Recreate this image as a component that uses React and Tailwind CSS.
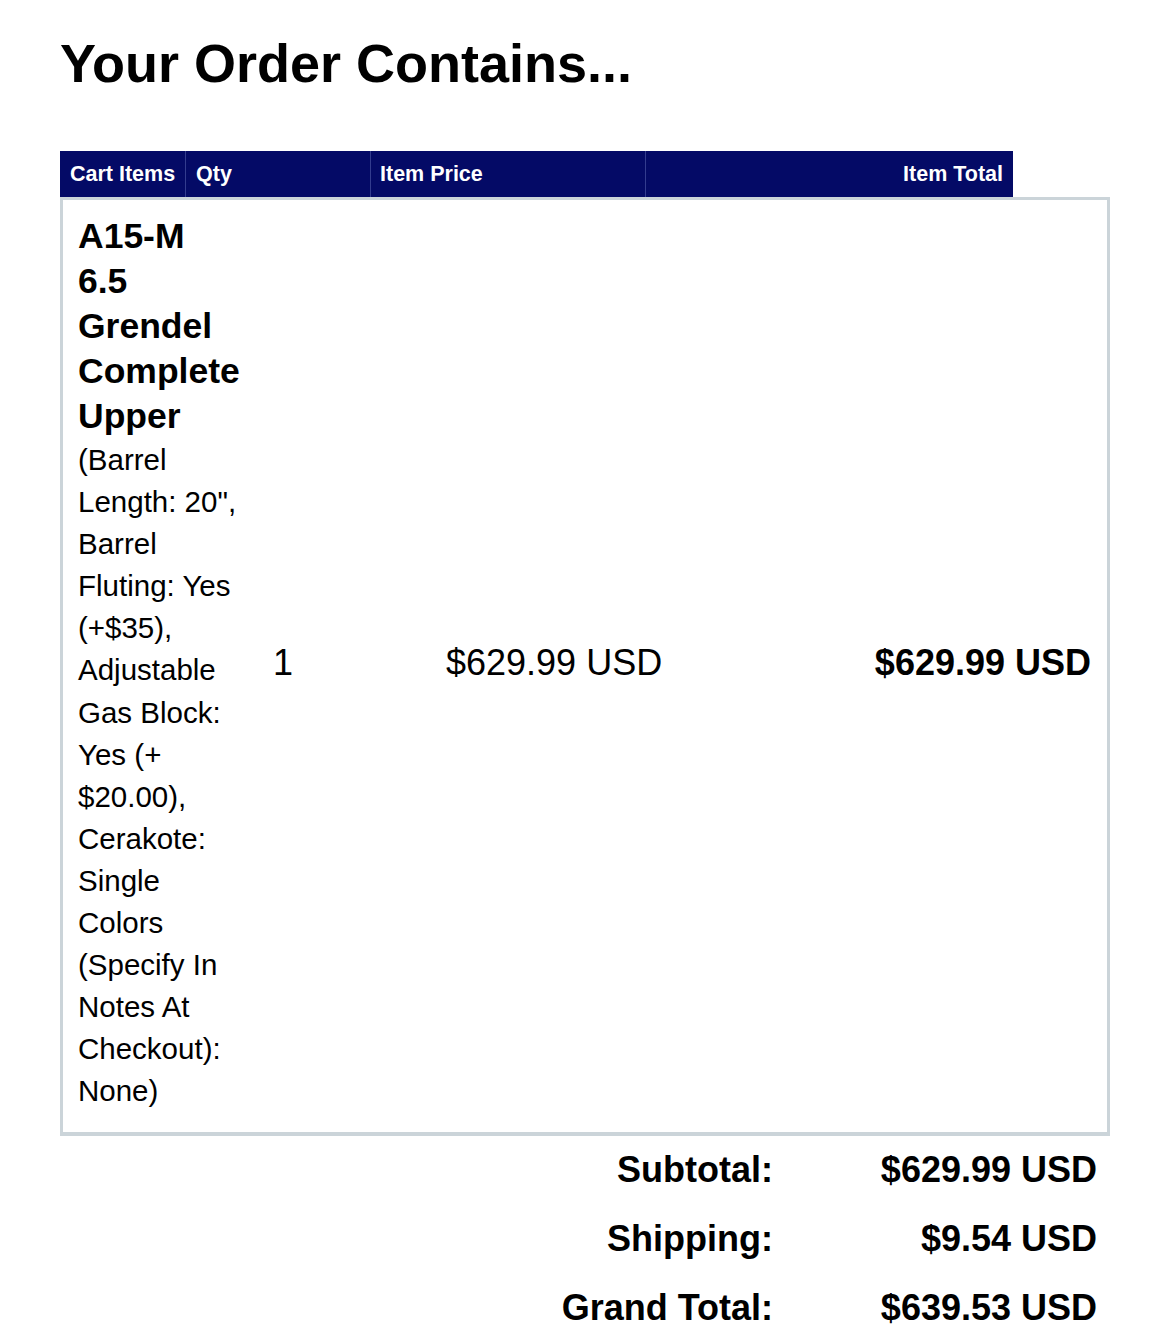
import React from 'react'

const headers = [
  { label: 'Cart Items', w: 'w-[125px]', align: 'pl-[10px]' },
  { label: 'Qty', w: 'w-[185px]', align: 'pl-[10px]' },
  { label: 'Item Price', w: 'w-[275px]', align: 'pl-[9px]' },
  { label: 'Item Total', w: 'w-[368px]', align: 'justify-end pr-[10px]' },
]

const summary = [
  { label: 'Subtotal:', value: '$629.99 USD' },
  { label: 'Shipping:', value: '$9.54 USD' },
  { label: 'Grand Total:', value: '$639.53 USD' },
]

const App = () => {
  return (
    <div className="min-h-[1341px] bg-white px-[60px] font-['Liberation_Sans',Arial,sans-serif] text-black">
      <h1 className="pt-[36px] text-[54px] font-bold leading-[54px]">Your Order Contains...</h1>

      <div className="mt-[61px] flex h-[46px] w-[953px] bg-[#040a66] text-white">
        {headers.map((h, i) => (
          <div
            key={h.label}
            className={`flex h-full items-center text-[21.5px] font-bold ${h.w} ${h.align} ${i > 0 ? 'border-l border-[#333c8e]' : ''}`}
          >
            {h.label}
          </div>
        ))}
      </div>

      <div className="flex w-[1050px] border-[3px] border-b-4 border-[#cbd4d9] pt-[14px] pb-[19px]">
        <div className="w-[200px] shrink-0 pl-[15px]">
          <div className="w-[162px]">
            <p className="text-[35.5px] font-bold leading-[45px]">A15-M 6.5 Grendel Complete Upper</p>
            <p className="text-[29.5px] leading-[42.1px]">
              (Barrel Length: 20", Barrel Fluting: Yes (+$35), Adjustable Gas Block: Yes (+ $20.00), Cerakote: Single Colors (Specify In Notes At Checkout): None)
            </p>
          </div>
        </div>
        <div className="flex w-[177px] shrink-0 items-center pl-[10px] text-[36px]">1</div>
        <div className="flex w-[300px] shrink-0 items-center pl-[6px] text-[36px]">$629.99 USD</div>
        <div className="flex flex-1 items-center justify-end pr-[16px] text-[36px] font-bold">$629.99 USD</div>
      </div>

      <div className="w-[1050px] pr-[13px]">
        {summary.map((row) => (
          <div key={row.label} className="flex h-[69px] items-center justify-end text-[36px] font-bold">
            <div className="text-right">{row.label}</div>
            <div className="w-[324px] text-right">{row.value}</div>
          </div>
        ))}
      </div>
    </div>
  )
}

export default App
